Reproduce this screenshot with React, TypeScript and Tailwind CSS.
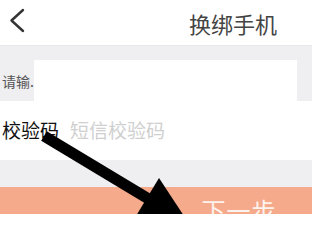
import React from "react";

export default function App() {
  const cjk = { fontFamily: '"Noto Sans CJK SC", "Noto Sans", sans-serif' };
  return (
    <div className="relative w-[312px] h-[214px] overflow-hidden bg-white" style={cjk}>
      <div className="h-[46px] flex items-center justify-between border-b border-[#e8e8e8] bg-white">
        <svg width="30" height="46" viewBox="0 0 30 46" className="ml-[2px]">
          <path d="M21 10 L9.5 20.5 L21 31" fill="none" stroke="#333" strokeWidth="2.4" strokeLinecap="round" strokeLinejoin="round" />
        </svg>
        <div className="pr-[35px] text-[22px] leading-none text-[#444]">换绑手机</div>
      </div>
      <div className="bg-[#efeef1] pt-[14px] pb-0 h-[55px] flex">
        <div className="w-[34px] flex items-center text-[14px] leading-none text-[#555] whitespace-nowrap overflow-hidden pl-[2px]">请输.</div>
        <div className="w-[263px] h-[41px] bg-white"></div>
      </div>
      <div className="h-[59px] flex items-center bg-white pb-[2px]">
        <span className="pl-[2px] text-[19px] leading-none text-[#111]">校验码</span>
        <span className="pl-[11px] text-[19px] leading-none text-[#cfcfcf]">短信校验码</span>
      </div>
      <div className="h-[27px] bg-[#efeef1]"></div>
      <div className="h-[40px] bg-[#f5aa8b] flex justify-center pl-[166px] pt-[11px]">
        <span className="text-[24px] leading-none text-[#fdf3ee] tracking-[1px] whitespace-nowrap">下一步</span>
      </div>
      <svg className="absolute inset-0" width="312" height="214" viewBox="0 0 312 214">
        <line x1="44" y1="136" x2="152" y2="201" stroke="#000" strokeWidth="11" />
        <polygon points="159,178 136,216 184,216" fill="#000" />
      </svg>
    </div>
  );
}
